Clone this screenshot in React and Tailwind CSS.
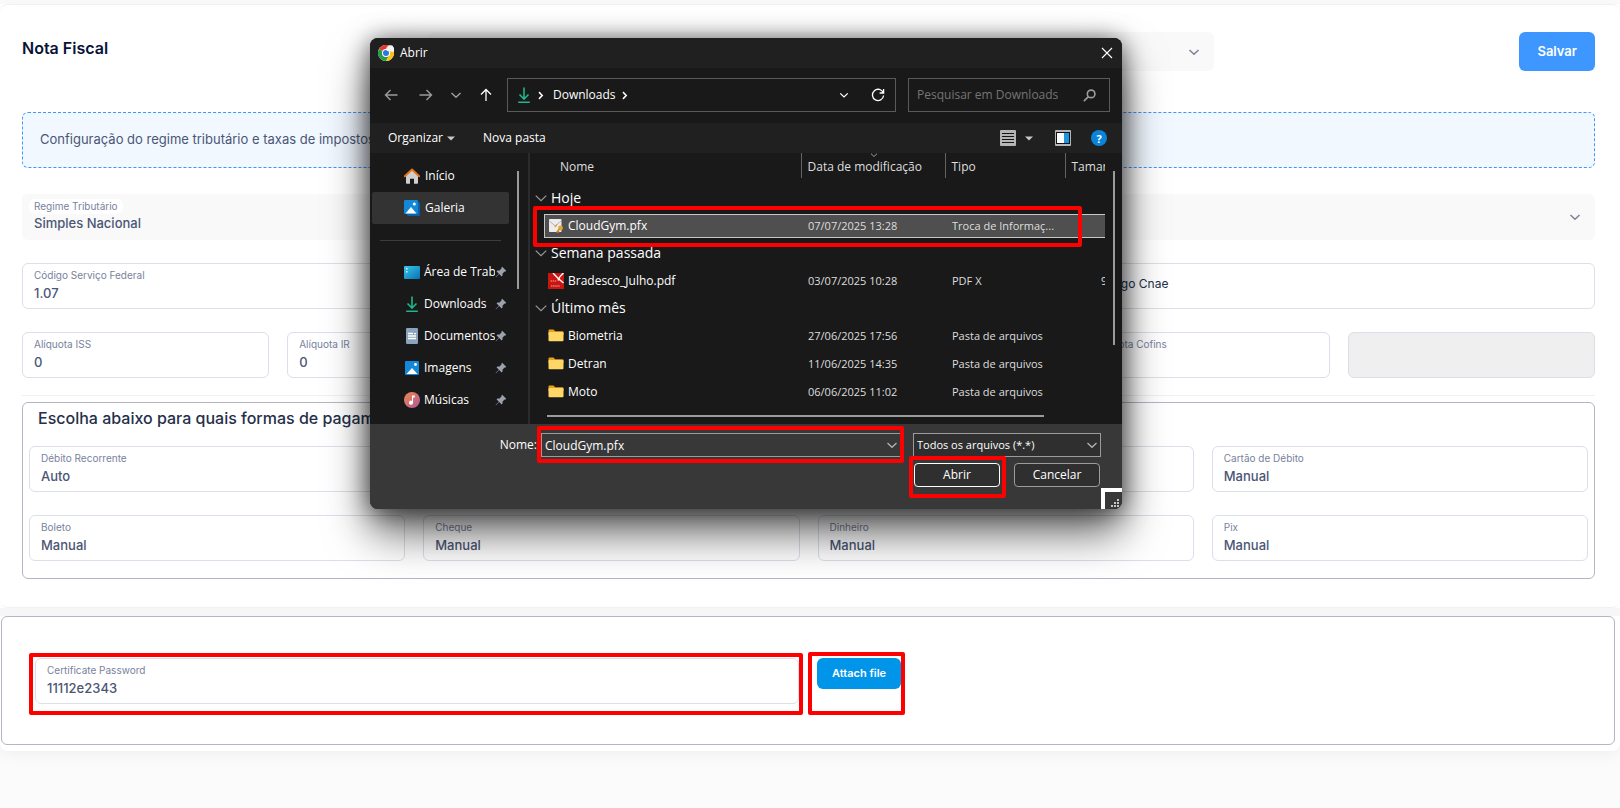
import React, { useState } from 'react';

const SIDEBAR_TOP = [
  { label: 'Início', icon: 'home' },
  { label: 'Galeria', icon: 'gallery', active: true },
];

const SIDEBAR_PINNED = [
  { label: 'Área de Trabalho', icon: 'desktop' },
  { label: 'Downloads', icon: 'download' },
  { label: 'Documentos', icon: 'document' },
  { label: 'Imagens', icon: 'image' },
  { label: 'Músicas', icon: 'music' },
];

const FILE_GROUPS = [
  {
    title: 'Hoje',
    files: [{ name: 'CloudGym.pfx', date: '07/07/2025 13:28', type: 'Troca de Informaç...', icon: 'cert', selected: true }],
  },
  {
    title: 'Semana passada',
    files: [{ name: 'Bradesco_Julho.pdf', date: '03/07/2025 10:28', type: 'PDF X', icon: 'pdf', size: '94 KB' }],
  },
  {
    title: 'Último mês',
    files: [
      { name: 'Biometria', date: '27/06/2025 17:56', type: 'Pasta de arquivos', icon: 'folder' },
      { name: 'Detran', date: '11/06/2025 14:35', type: 'Pasta de arquivos', icon: 'folder' },
      { name: 'Moto', date: '06/06/2025 11:02', type: 'Pasta de arquivos', icon: 'folder' },
    ],
  },
];

const Chevron = ({ className, width = 1.5 }) => (
  <svg viewBox="0 0 12 12" className={className} fill="none" stroke="currentColor" strokeWidth={width} aria-hidden="true">
    <path d="M1.5 4 6 8.3 10.5 4" />
  </svg>
);

const Icon = ({ name }) => {
  switch (name) {
    case 'home':
      return (
        <svg viewBox="0 0 16 16" className="size-4 shrink-0" aria-hidden="true">
          <path d="M2 7.500 8 2l6 5.500V15a.8.8 0 0 1-.8.8H10v-5H6v5H2.800A.8.8 0 0 1 2 15z" fill="#cfcfcf" />
          <path d="M.8 8.300 8 1.500l7.200 6.800" fill="none" stroke="#e8741c" strokeWidth="1.900" strokeLinejoin="round" strokeLinecap="round" />
        </svg>
      );
    case 'gallery':
      return (
        <svg viewBox="0 0 16 16" className="size-4 shrink-0" aria-hidden="true">
          <rect x="3" y="2" width="13" height="14" rx="1.500" fill="#0b5ea8" />
          <rect x="0" y="0" width="14" height="14" rx="1.200" fill="#1488d8" />
          <path d="M1.500 13.500 7 7l5.500 6.500z" fill="#fff" />
          <circle cx="10.300" cy="4" r="1.500" fill="#fff" />
        </svg>
      );
    case 'desktop':
      return (
        <svg viewBox="0 0 16 16" className="size-4 shrink-0" aria-hidden="true">
          <defs>
            <linearGradient id="desk" x1="0" y1="0" x2="1" y2="1">
              <stop offset="0" stopColor="#35c9ea" />
              <stop offset="1" stopColor="#0a6fb5" />
            </linearGradient>
          </defs>
          <rect y="2" width="16" height="13" rx="1" fill="url(#desk)" />
          <path d="M2 4h1.500v1.500H2zM2 7h1.500v1.500H2z" fill="#d9f6ff" />
        </svg>
      );
    case 'download':
      return (
        <svg viewBox="0 0 16 16" className="size-4 shrink-0" fill="none" stroke="#1fb58a" strokeWidth="1.600" aria-hidden="true">
          <path d="M8 .5v11M3.500 7.500 8 12l4.500-4.500M2.200 15.200h11.600" />
        </svg>
      );
    case 'document':
      return (
        <svg viewBox="0 0 16 16" className="size-4 shrink-0" aria-hidden="true">
          <rect x="2" y="0" width="12" height="16" rx="1.200" fill="#8ba3bd" />
          <path d="M4 5.500h5M4 8h8M4 10.500h8" stroke="#fff" strokeWidth="1.300" />
          <path d="M10 4.900h2v1.300h-2z" fill="#fff" />
        </svg>
      );
    case 'image':
      return (
        <svg viewBox="0 0 16 16" className="size-4 shrink-0" aria-hidden="true">
          <rect x="1" y="1" width="14" height="14" rx="1" fill="#1488d8" />
          <path d="M2.500 14 8 8l5.500 6z" fill="#fff" />
          <circle cx="11.500" cy="4.500" r="1.400" fill="#fff" />
        </svg>
      );
    case 'music':
      return (
        <svg viewBox="0 0 16 16" className="size-4 shrink-0" aria-hidden="true">
          <defs>
            <linearGradient id="music" x1="0" y1="0" x2="1" y2="1">
              <stop offset="0" stopColor="#f08a4b" />
              <stop offset="1" stopColor="#b0559c" />
            </linearGradient>
          </defs>
          <circle cx="8" cy="8" r="8" fill="url(#music)" />
          <path d="M8 3.500h2.800v2H9v5.200a2 2 0 1 1-1-1.700z" fill="#fff" />
        </svg>
      );
    case 'cert':
      return (
        <svg viewBox="0 0 16 16" className="size-4 shrink-0" aria-hidden="true">
          <rect x="1" y="1" width="12.500" height="13" rx=".8" fill="#ececec" />
          <path d="m1.500 3 5.700 5L13 3" fill="none" stroke="#b5b5b5" />
          <path d="M9 6.500 6.800 9" stroke="#d9a33a" strokeWidth="1.200" />
          <circle cx="12.500" cy="10" r="2.400" fill="#e0a63b" />
          <path d="m11.500 11-3 3.500M10 13l1 1.500" stroke="#c98a2b" strokeWidth="1.400" />
        </svg>
      );
    case 'pdf':
      return (
        <svg viewBox="0 0 16 16" className="size-4 shrink-0" aria-hidden="true">
          <rect width="16" height="16" fill="#c8150f" />
          <path d="M5 0C8 3.500 11 6.500 15.500 10M15.500 0c-2.500 2-4.500 4.500-5.500 7.500" stroke="#fff" strokeWidth="1.400" fill="none" />
          <path d="M2.500 8h6M3 13h9" stroke="#f3a5a0" strokeWidth="1" strokeDasharray="1.500 .6" />
        </svg>
      );
    default:
      return (
        <svg viewBox="0 0 16 16" className="size-4 shrink-0" aria-hidden="true">
          <path d="M.5 2.500a1 1 0 0 1 1-1h4l1.700 1.800h7.300a1 1 0 0 1 1 1V7H.5z" fill="#e8a317" />
          <rect x=".5" y="4" width="15" height="9.200" rx=".9" fill="#ffd766" />
        </svg>
      );
  }
};

const Pin = () => (
  <svg viewBox="0 0 12 12" className="size-3 shrink-0" fill="#9aa3ad" aria-hidden="true">
    <path d="M7.200.8 11.200 4.800 10.300 5.700 9.600 5.500 7.600 7.500 7.500 9.600 6.600 10.400 4.200 8 1 11.300.6 11 3.900 7.700 1.600 5.400 2.400 4.500 4.500 4.400 6.500 2.400 6.300 1.700z" />
  </svg>
);

const ChromeLogo = () => (
  <svg viewBox="0 0 16 16" className="size-4 shrink-0" aria-hidden="true">
    <circle cx="8" cy="8" r="8" fill="#fff" />
    <path d="M8 8 1.070 4A8 8 0 0 1 14.930 4H8z" fill="#e33b2e" />
    <path d="M8 8 1.070 4A8 8 0 0 0 8 16l3.460-6z" fill="#2a9c48" />
    <path d="M8 16A8 8 0 0 0 14.930 4H8l3.460 6z" fill="#fbc116" />
    <circle cx="8" cy="8" r="4" fill="#fff" />
    <circle cx="8" cy="8" r="3" fill="#2f75e4" />
    <path d="M9.500 6a2.200 2.200 0 0 1-.3-3.900A2.800 2.800 0 0 1 12 .3a3 3 0 0 1 3.600 2.200 2.200 2.200 0 0 1-.4 4.500L12 6.300z" fill="#f4f4f4" />
  </svg>
);

const Highlight = ({ className }) => (
  <div className={`pointer-events-none absolute rounded-xs border-4 border-[#ff0000] ${className}`} />
);

const Field = ({ id, label, value }) => (
  <div className="min-w-0 rounded-md border border-[#dbdfe9] bg-white px-[11px] pt-1 pb-[5px]">
    <label htmlFor={id} className="block truncate text-[10px] leading-[15px] text-[#78829d]">{label}</label>
    <input id={id} defaultValue={value} className="block h-5 w-full text-[13px] font-medium text-[#4b5675] outline-none" />
  </div>
);

const Sidebar = () => (
  <nav className="relative w-[159px] shrink-0 border-r-2 border-[#2b2b2b] pt-[7px] text-xs text-white">
    <ul>
      {SIDEBAR_TOP.map(item => (
        <li key={item.label}>
          <a
            href="#"
            className={`ml-px flex h-8 w-[137px] items-center gap-[5px] rounded-xs pl-8 ${item.active ? 'bg-[#333333]' : ''}`}
          >
            <Icon name={item.icon} />
            {item.label}
          </a>
        </li>
      ))}
    </ul>
    <hr className="mt-4 mb-[15px] ml-[9px] w-[121px] border-[#3d3d3d]" />
    <ul>
      {SIDEBAR_PINNED.map(item => (
        <li key={item.label}>
          <a href="#" className="ml-px flex h-8 w-[137px] items-center pl-8">
            <Icon name={item.icon} />
            <span className="ml-1 w-[71px] shrink-0 overflow-hidden whitespace-nowrap">{item.label}</span>
            <Pin />
          </a>
        </li>
      ))}
    </ul>
    <div className="absolute top-[18px] right-[9px] h-[118px] w-[2px] bg-[#9b9b9b]" />
  </nav>
);

const FileList = () => (
  <div className="relative min-w-0 flex-1 pr-[17px]">
    <div className="overflow-hidden">
      <table className="w-[610px] table-fixed border-collapse text-left text-xs text-[#dedede]">
        <colgroup>
          <col className="w-[271px]" />
          <col className="w-36" />
          <col className="w-[120px]" />
          <col />
        </colgroup>
        <thead>
          <tr className="h-[25px]">
            <th className="border-r border-[#636363] p-0 pt-[2px] pl-[30px] font-normal">Nome</th>
            <th className="relative border-r border-[#636363] p-0 pt-[2px] pl-[6px] font-normal">
              <Chevron className="absolute -top-[2px] left-[68px] size-2 text-[#9b9b9b]" />
              Data de modificação
            </th>
            <th className="border-r border-[#636363] p-0 pt-[2px] pl-[6px] font-normal">Tipo</th>
            <th className="p-0 pt-[2px] pl-[6px] font-normal">Tamanho</th>
          </tr>
          <tr className="h-[7px]" />
        </thead>
        {FILE_GROUPS.map(group => (
          <tbody key={group.title}>
            <tr className="h-[27px]">
              <th colSpan={4} className="p-0 pb-px pl-1 text-sm font-normal text-white">
                <span className="flex items-center gap-[3px]">
                  <Chevron className="size-[14px] text-[#9b9b9b]" width={1} />
                  {group.title}
                </span>
              </th>
            </tr>
            {group.files.map(file => {
              const cell = file.selected ? 'border-y border-[#c8c8c8] bg-[#4f4f4f]' : 'border-y border-transparent';
              return (
                <tr key={file.name} className="h-7">
                  <td className="p-0 pl-[14px]">
                    <div className={`flex h-6 items-center gap-1 border-l pl-[3px] text-white ${cell}`}>
                      <Icon name={file.icon} />
                      {file.name}
                    </div>
                  </td>
                  <td className="p-0 text-[11px]"><div className={`h-6 pl-[7px] leading-[22px] ${cell}`}>{file.date}</div></td>
                  <td className="p-0 text-[11px]"><div className={`h-6 pl-[7px] leading-[22px] ${cell}`}>{file.type}</div></td>
                  <td className="p-0 text-[11px]"><div className={`h-6 pl-9 leading-[22px] ${cell}`}>{file.size}</div></td>
                </tr>
              );
            })}
          </tbody>
        ))}
      </table>
    </div>
    <div className="mt-[9px] ml-[17px] h-[2px] w-[497px] bg-[#9b9b9b]" />
    <div className="absolute top-[18px] right-[7px] h-[174px] w-[2px] bg-[#9b9b9b]" />
    <Highlight className="top-[53px] left-[3px] h-[41px] w-[549px]" />
  </div>
);

const OpenFileDialog = () => {
  const [fileName, setFileName] = useState('CloudGym.pfx');

  return (
    <div
      role="dialog"
      aria-label="Abrir"
      className="absolute top-[38px] left-[370px] w-[752px] overflow-hidden rounded-lg bg-[#191919] font-['Open_Sans','Noto_Sans',sans-serif] text-xs text-white shadow-[0_24px_44px_rgba(0,0,0,0.6),0_2px_24px_rgba(0,0,0,0.6)]"
    >
      <div className="flex h-[30px] items-center gap-[6px] bg-[#202020] pr-[9px] pl-2">
        <ChromeLogo />
        <span>Abrir</span>
        <button aria-label="Fechar" className="ml-auto">
          <svg viewBox="0 0 12 12" className="size-3" stroke="#fff" strokeWidth="1.100" aria-hidden="true">
            <path d="m1 1 10 10M11 1 1 11" />
          </svg>
        </button>
      </div>

      <div className="flex h-[55px] items-center pr-3 pb-px pl-[14px]">
        <div className="flex w-[123px] items-center justify-between pr-[14px] text-[#9b9b9b]">
          <button aria-label="Voltar">
            <svg viewBox="0 0 14 14" className="size-[14px]" fill="none" stroke="currentColor" strokeWidth="1.400"><path d="M13.500 7H1.500M6.500 2l-5 5 5 5" /></svg>
          </button>
          <button aria-label="Avançar" className="ml-1">
            <svg viewBox="0 0 14 14" className="size-[14px]" fill="none" stroke="currentColor" strokeWidth="1.400"><path d="M.5 7h12M7.500 2l5 5-5 5" /></svg>
          </button>
          <button aria-label="Locais recentes"><Chevron className="size-3" width={1.5} /></button>
          <button aria-label="Acima" className="text-white">
            <svg viewBox="0 0 14 14" className="size-[14px]" fill="none" stroke="currentColor" strokeWidth="1.300"><path d="M7 13V1.500M2 6.500l5-5 5 5" /></svg>
          </button>
        </div>
        <div className="flex h-[34px] flex-1 items-center border border-[#5a5a5a] pr-[10px] pl-2">
          <Icon name="download" />
          <Chevron className="ml-1 size-[9px] -rotate-90" width={2} />
          <span className="mr-1 ml-2">Downloads</span>
          <Chevron className="size-[9px] -rotate-90" width={2} />
          <button aria-label="Locais anteriores" className="ml-auto"><Chevron className="size-[10px]" /></button>
          <button aria-label="Atualizar" className="ml-[22px]">
            <svg viewBox="0 0 14 14" className="size-[14px]" fill="none" stroke="currentColor" strokeWidth="1.300">
              <path d="M12.300 5A5.600 5.600 0 1 0 12.600 7.500M12.600 1v4H8.600" />
            </svg>
          </button>
        </div>
        <div className="ml-3 flex h-[34px] w-[202px] items-center border border-[#5a5a5a] pr-[13px] pl-2">
          <input
            aria-label="Pesquisar em Downloads"
            placeholder="Pesquisar em Downloads"
            className="min-w-0 flex-1 outline-none placeholder:text-[#757575]"
          />
          <svg viewBox="0 0 12 12" className="size-[13px]" fill="none" stroke="#9b9b9b" strokeWidth="1.500" aria-hidden="true">
            <circle cx="7.500" cy="4.500" r="3.500" />
            <path d="M5 7 .8 11.200" />
          </svg>
        </div>
      </div>

      <div className="flex h-[30px] items-center bg-[#202020] pr-[15px] pl-[18px]">
        <button className="flex items-center gap-1">
          Organizar
          <svg viewBox="0 0 8 5" className="h-[5px] w-2" fill="#c8c8c8" aria-hidden="true"><path d="M0 .5h8L4 4.500z" /></svg>
        </button>
        <button className="ml-7">Nova pasta</button>
        <button aria-label="Exibição" className="ml-auto flex items-center gap-[9px]">
          <svg viewBox="0 0 16 16" className="size-4" aria-hidden="true">
            <rect width="16" height="16" rx="1" fill="#b5b5b5" />
            <path d="M2 3.500h12M2 6.500h12M2 9.500h12M2 12.500h12" stroke="#151515" />
          </svg>
          <svg viewBox="0 0 8 5" className="h-[5px] w-2" fill="#c8c8c8" aria-hidden="true"><path d="M0 .5h8L4 4.500z" /></svg>
        </button>
        <button aria-label="Painel de visualização" className="ml-[22px]">
          <svg viewBox="0 0 16 16" className="size-4" aria-hidden="true">
            <rect width="16" height="16" rx="1" fill="#b5b5b5" />
            <rect x="1.500" y="2.500" width="13" height="11" fill="#fff" stroke="#111" />
            <rect x="9" y="3" width="5" height="10" fill="#1b95e0" />
          </svg>
        </button>
        <button aria-label="Ajuda" className="ml-5 flex size-4 items-center justify-center rounded-full bg-[#0a84d8] text-[11px] leading-none font-bold">?</button>
      </div>

      <div className="flex h-[271px] pl-px">
        <Sidebar />
        <FileList />
      </div>

      <div className="relative h-[85px] bg-[#383838] pt-[9px] pr-[21px]">
        <div className="flex items-center">
          <label htmlFor="file-name" className="w-[171px] pr-1 text-right">Nome:</label>
          <div className="relative flex h-6 flex-1 items-center border border-[#9b9b9b] pr-[3px]">
            <input
              id="file-name"
              value={fileName}
              onChange={e => setFileName(e.target.value)}
              className="min-w-0 flex-1 pt-px pl-[3px] outline-none"
            />
            <Chevron className="size-3 text-[#b5b5b5]" width={1.2} />
            <Highlight className="-top-2 -right-[3px] -bottom-[7px] -left-[5px]" />
          </div>
          <div className="relative ml-[11px] w-[188px]">
            <select aria-label="Tipo de arquivo" className="block h-6 w-full appearance-none border border-[#9b9b9b] bg-[#2f2f2f] pl-[3px] text-[11px] outline-none">
              <option>Todos os arquivos (*.*)</option>
            </select>
            <Chevron className="pointer-events-none absolute top-[6px] right-[3px] size-3 text-[#b5b5b5]" width={1.2} />
          </div>
        </div>
        <div className="mt-[6px] flex justify-end gap-[14px] pr-px">
          <div className="relative">
            <button className="block h-6 w-[86px] rounded-sm border border-white bg-[#2f2f2f]">Abrir</button>
            <Highlight className="-top-[7px] -right-[6px] -bottom-[11px] -left-[5px]" />
          </div>
          <button className="h-6 w-[86px] rounded-sm border border-[#9b9b9b] bg-[#2f2f2f]">Cancelar</button>
        </div>
        <div className="absolute right-0 bottom-0 size-[21px] border-t-4 border-l-4 border-white">
          <svg viewBox="0 0 17 17" className="size-[17px]" fill="#c8c8c8" aria-hidden="true">
            <path d="M12 7h2v2h-2zM9 10h2v2H9zM12 10h2v2h-2zM6 13h2v2H6zM9 13h2v2H9zM12 13h2v2h-2z" />
          </svg>
        </div>
      </div>
    </div>
  );
};

export default function App() {
  return (
    <main className="relative min-h-screen overflow-hidden bg-[#fbfbfb] pt-1 font-['Inter',sans-serif]">
      <div className="rounded-b-lg bg-white pb-[6px] shadow-[0_3px_16px_rgba(0,0,0,0.05)]">
        <section className="rounded-lg border-y border-[#f1f1f2] bg-white pt-[27px] pr-[25px] pb-7 pl-[22px]">
          <header className="flex items-center">
            <h1 className="-mt-2 text-base font-semibold text-[#071437]">Nota Fiscal</h1>
            <div className="relative mr-[305px] ml-auto w-1/2">
              <select aria-label="Empresa" className="block h-[39px] w-full appearance-none rounded-md bg-[#f9f9f9]" />
              <Chevron className="pointer-events-none absolute top-[14px] right-[14px] size-3 text-[#7e8299]" />
            </div>
            <button className="h-[39px] rounded-md bg-[#3e97ff] px-[18px] text-[13px] font-semibold text-white">Salvar</button>
          </header>

          <div className="mt-[41px] rounded-md border border-dashed border-[#3e97ff] bg-[#f1f8ff] px-[17px] pt-4 pb-[18px] text-[13px] leading-5 text-[#4b5675]">
            Configuração do regime tributário e taxas de impostos
          </div>

          <div className="relative mt-[26px] rounded-md bg-[#f9f9f9] px-3 pt-[5px] pb-[6px]">
            <label htmlFor="regime" className="-ml-[5px] block w-fit rounded-md bg-white px-[5px] text-[10px] leading-[15px] text-[#78829d]">Regime Tributário</label>
            <select id="regime" className="block h-5 w-full appearance-none text-[13px] font-medium text-[#4b5675] outline-none">
              <option>Simples Nacional</option>
            </select>
            <Chevron className="pointer-events-none absolute top-[17px] right-[14px] size-3 text-[#7e8299]" />
          </div>

          <div className="mt-[23px] grid grid-cols-3 gap-[18px]">
            <Field id="servico-federal" label="Código Serviço Federal" value="1.07" />
            <Field id="servico-municipal" label="Código Serviço Municipal" value="" />
            <input aria-label="Código Cnae" placeholder="Código Cnae" className="rounded-md border border-[#dbdfe9] px-[11px] pb-[5px] text-xs outline-none placeholder:text-[#252f4a]" />
          </div>

          <div className="mt-[23px] grid grid-cols-6 gap-[18px]">
            <Field id="iss" label="Alíquota ISS" value="0" />
            <Field id="ir" label="Alíquota IR" value="0" />
            <Field id="inss" label="Alíquota INSS" value="0" />
            <Field id="pis" label="Alíquota PIS" value="0" />
            <Field id="cofins" label="Alíquota Cofins" value="" />
            <input aria-label="Alíquota total" disabled className="min-w-0 rounded-md border border-[#dbdfe9] bg-[#efefef]" />
          </div>

          <hr className="mt-[17px] border-[#eff0f2]" />

          <div className="mt-[6px] rounded-md border border-[#b5b5c3] px-[6px] pt-[3px] pb-[17px]">
            <h2 className="pl-[9px] text-base font-medium text-[#252f4a]">Escolha abaixo para quais formas de pagamento</h2>
            <div className="mt-4 grid grid-cols-4 gap-x-[18px] gap-y-[23px]">
              <Field id="debito-recorrente" label="Débito Recorrente" value="Auto" />
              <Field id="credito-recorrente" label="Crédito Recorrente" value="Auto" />
              <Field id="credito" label="Cartão de Crédito" value="Manual" />
              <Field id="debito" label="Cartão de Débito" value="Manual" />
              <Field id="boleto" label="Boleto" value="Manual" />
              <Field id="cheque" label="Cheque" value="Manual" />
              <Field id="dinheiro" label="Dinheiro" value="Manual" />
              <Field id="pix" label="Pix" value="Manual" />
            </div>
          </div>
        </section>

        <div className="h-2 bg-[#f6f6f6]" />

        <section className="mr-[5px] ml-px rounded-md border border-[#b5b5c3] bg-white px-8 pt-[41px] pb-10">
          <div className="flex items-start gap-[18px]">
            <div className="relative w-[calc(50%-9px)] pl-px">
              <Field id="cert-password" label="Certificate Password" value="11112e2343" />
              <Highlight className="-top-[5px] -right-[4px] -bottom-[11px] -left-[5px]" />
            </div>
            <div className="relative">
              <button className="block h-[31px] rounded-md bg-[#0095e8] px-[15px] text-[11px] font-semibold text-white">Attach file</button>
              <Highlight className="-top-[6px] -right-[4px] -left-[9px] h-[63px]" />
            </div>
          </div>
        </section>
      </div>

      <OpenFileDialog />
    </main>
  );
}
